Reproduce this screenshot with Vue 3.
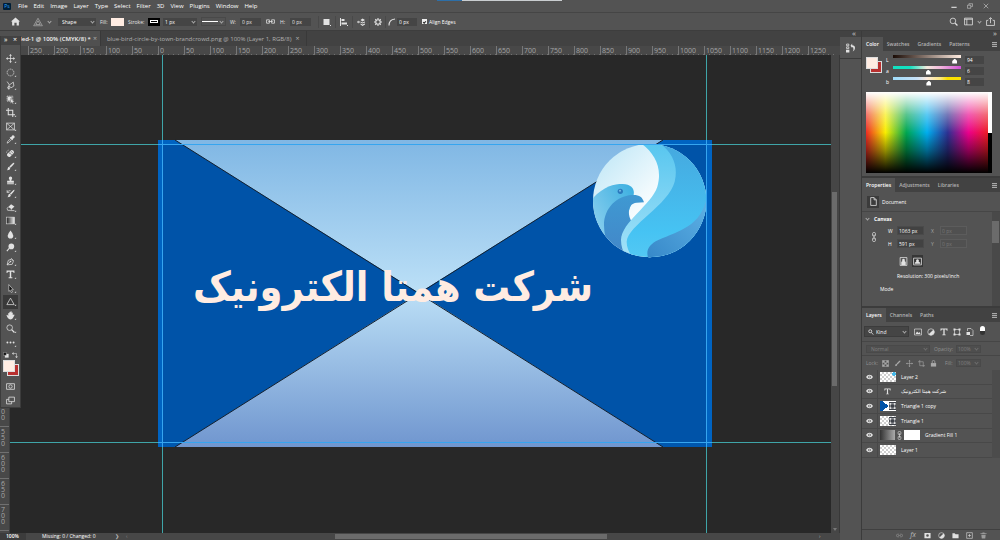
<script setup>
import { ref } from 'vue'

const menus = ['File', 'Edit', 'Image', 'Layer', 'Type', 'Select', 'Filter', '3D', 'View', 'Plugins', 'Window', 'Help']

const topMarks = Array.from({ length: 31 }, (_, i) => Math.abs(i * 50 - 250))
const sideMarks = ['500', '550', '600', '650', '700', '']

const line = 'fill="none" stroke="#e2e2e2" stroke-width="1.3"'
const tools = [
  { name: 'Move', art: `<path ${line} d="M8 2v12M2 8h12"/><path d="M8 0l2.500 3h-5zM8 16l2.500-3h-5zM0 8l3-2.500v5zM16 8l-3-2.500v5z"/>` },
  { name: 'Elliptical marquee', art: `<circle cx="8" cy="8" r="6" ${line} stroke-dasharray="2.500 1.200"/>` },
  { name: 'Lasso', art: `<path ${line} d="M2 1l4 6 7-5 1 7-5 3-3-3-2 2 1 4M6 7l-2 3"/><circle cx="5" cy="12" r="2" ${line}/>` },
  { name: 'Object selection', art: `<path ${line} stroke-dasharray="2 1" d="M2 2h10v9H2z"/><path d="M3 3h7v7H3z"/><path stroke="#555" stroke-width=".6" d="M8 6l7 6-3 .3 1.500 3-1.500.7-1.500-3L8 15z"/>` },
  { name: 'Crop', art: `<path fill="none" stroke="#e2e2e2" stroke-width="1.800" d="M4 0v12h12M0 4h12v12"/>` },
  { name: 'Frame', art: `<path ${line} d="M1 2h14v12H1zM1 2l14 12M15 2L1 14"/>` },
  { name: 'Eyedropper', art: `<path d="M9 4l2-3q2-1 3.500.5T15 5l-3 2 .5 1-1.500 1.500L6.500 5 8 3.500z"/><path ${line} d="M8.500 6L3 11.500 2 14.500 5 13l5-5"/>` },
  { name: 'Healing brush', art: `<path d="M2 9l7-7q2-1 4 1t1 4l-7 7q-2 1-4-1T2 9z"/><path fill="none" stroke="#555" stroke-width="1" d="M5 6l6 5M8 3l5 5M6 8h1M8 7h1"/><path ${line} stroke-dasharray="1 1" d="M1 7q0-5 5-5"/>` },
  { name: 'Brush', art: `<path d="M14.500 1.500q1 1-1 3L8 10 6 8l5.500-5.500q2-2 3-1zM5.500 8.500l2 2q0 4-6 4 2-1.500 1.500-3 .5-3 2.500-3z"/>` },
  { name: 'Clone stamp', art: `<path d="M8 1q3 0 3 3 0 1-1.500 3v1.500H14V12H2V8.500h4.500V7Q5 5 5 4q0-3 3-3zM2 13h12v1.500H2z"/>` },
  { name: 'History brush', art: `<path d="M15 1.500q.5 1-1 3L9 10 7 8l5-5q2-2 3-1.500zM6.500 8.500l2 2q0 4-6 4 2-1.500 1.500-3 .5-3 2.500-3z"/><path ${line} d="M2 2v4h4M2 6q2-4 6-3"/>` },
  { name: 'Eraser', art: `<path d="M9 2l6 4-5 5-6-4z"/><path ${line} d="M4 7l-2 3 1 3h5l2-2M8 13.500h7"/>` },
  { name: 'Gradient', art: `<rect x="1" y="2" width="14" height="12" fill="url(#toolGradient)" stroke="#e2e2e2"/>` },
  { name: 'Blur', art: `<path d="M8 1q5 6 5 9 0 5-5 5t-5-5q0-3 5-9z"/>` },
  { name: 'Dodge', art: `<circle cx="9.500" cy="6" r="5"/><path stroke="#e2e2e2" stroke-width="1.800" d="M6 9l-4.500 5.500"/>` },
  { name: 'Pen', art: `<path ${line} d="M2 14l2-8 5-2 4 4-2 5zM2 14l5-5M9 2l5 5"/><circle cx="8" cy="8" r="1.500"/>` },
  { name: 'Type', art: `<path d="M1 1h14v4.500h-1.500q0-2.500-2-2.500H9.300v10h2v1.500H4.700V13h2V3H4.500q-2 0-2 2.500H1z"/>` },
  { name: 'Path selection', art: `<path fill="#111" stroke="#e2e2e2" stroke-width="1.100" d="M5 1l8 9-3.500.3 2 4-2 1-2-4L5 13z"/>` },
  { name: 'Triangle', active: true, art: `<path ${line} d="M8 2l6.500 11.500h-13z"/>` },
  { name: 'Hand', art: `<path d="M4 9V4q1-1 2 0V2q1-1 2 0V1q1-1 2 0v2q1-1 2 0v4l2-1q1.500 0 1 1.500L12 13q-1 2-4 2t-5-3L1 8q0-1.500 1.500-1z"/>` },
  { name: 'Zoom', art: `<circle cx="6.500" cy="6.500" r="5" ${line}/><path stroke="#e2e2e2" stroke-width="2.200" d="M10 10l5 5"/>` },
  { name: 'Edit toolbar', art: `<circle cx="2.500" cy="8" r="1.700"/><circle cx="8" cy="8" r="1.700"/><circle cx="13.500" cy="8" r="1.700"/>` }
]
const corner = '<path fill="#c8c8c8" d="M18 13v3h-3z"/>'

const sliders = ref([
  { id: 'L', value: '94', at: 94 },
  { id: 'a', value: '6', at: 52 },
  { id: 'b', value: '8', at: 53 }
])
const size = ref([
  { id: 'W', value: '1063 px', axis: 'X' },
  { id: 'H', value: '591 px', axis: 'Y' }
])

const filters = [
  { name: 'Pixel layers', art: `<path ${line} d="M1 2h14v12H1z"/><path d="M3 12l3-5 3 3 2-2 2 4z"/>` },
  { name: 'Adjustment layers', art: `<circle cx="8" cy="8" r="6.500" ${line}/><path d="M12.600 3.400A6.500 6.500 0 013.400 12.600z"/>` },
  { name: 'Type layers', art: tools[16].art },
  { name: 'Shape layers', art: `<path ${line} d="M3 3h10v10H3z"/><path d="M1 1h4v4H1zM11 1h4v4h-4zM1 11h4v4H1zM11 11h4v4h-4z"/>` },
  { name: 'Smart objects', art: `<path ${line} d="M3 6V1h7l4 4v10H8"/><path d="M1 8h7v6H1z"/>` }
]
const locks = [
  { name: 'Lock transparency', art: `<path ${line} d="M1 1h14v14H1z"/><path d="M1 1h5v5H1zM10 1h5v5h-5zM5.500 5.500h5v5h-5zM1 10h5v5H1zM10 10h5v5h-5z"/>` },
  { name: 'Lock pixels', art: tools[8].art },
  { name: 'Lock position', art: tools[0].art },
  { name: 'Lock artboard', art: `<path ${line} d="M4 0v13h12M0 4h12v12"/>` },
  { name: 'Lock all', art: `<path d="M2 7h12v8H2z"/><path fill="none" stroke="#e2e2e2" stroke-width="1.800" d="M5 7V4q0-3 3-3t3 3v3"/>` }
]
const layers = [
  { name: 'Layer 2', kind: 'logo' },
  { name: 'شرکت همتا الکترونیک', kind: 'type' },
  { name: 'Triangle 1 copy', kind: 'blue' },
  { name: 'Triangle 1', kind: 'shape' },
  { name: 'Gradient Fill 1', kind: 'fill' },
  { name: 'Layer 1', kind: 'plain' }
]
const layerActions = [
  { name: 'Link layers', off: true, art: `<path ${line} d="M7 5H4q-3 0-3 3t3 3h3M9 5h3q3 0 3 3t-3 3H9M5 8h6"/>` },
  { name: 'Layer effects', fx: true },
  { name: 'Add mask', art: `<path d="M1 2h14v12H1zM8 5a3 3 0 100 6 3 3 0 000-6z" fill-rule="evenodd"/>` },
  { name: 'New adjustment', art: filters[1].art },
  { name: 'New group', art: `<path d="M1 3h5l2 2h7v9H1z"/>` },
  { name: 'New layer', art: `<path ${line} d="M1.500 1.500h13v13h-13zM8 4.500v7M4.500 8h7"/>` },
  { name: 'Delete layer', off: true, art: `<path d="M1 3h4l1-2h4l1 2h4v1.500H1zM3 6h10l-1 9H4z"/>` }
]
</script>

<template>
  <div class="app">
    <svg class="defs" aria-hidden="true">
      <defs>
        <linearGradient id="toolGradient"><stop stop-color="#222" /><stop offset="1" stop-color="#eee" /></linearGradient>
      </defs>
    </svg>
    <div class="behind"></div>

    <header class="menubar">
      <span class="ps">Ps</span>
      <nav class="menus"><button v-for="m in menus" :key="m">{{ m }}</button></nav>
      <div class="window-buttons">
        <button aria-label="Minimize"><svg viewBox="0 0 16 16"><path d="M1 10h14v3H1z" /></svg></button>
        <button aria-label="Restore"><svg viewBox="0 0 16 16"><path class="ln" d="M5 5V2h10v7h-4M1 6h9v8H1z" /></svg></button>
        <button aria-label="Close"><svg viewBox="0 0 16 16"><path class="ln" d="M2 2l12 12M14 2L2 14" /></svg></button>
      </div>
    </header>

    <div class="options">
      <button class="home" aria-label="Home"><svg viewBox="0 0 16 16"><path d="M8 1l8 7h-2v7h-4v-5H6v5H2V8H0z" /></svg></button>
      <button class="preset" aria-label="Triangle tool preset">
        <svg viewBox="0 0 16 16"><path class="thin" d="M8 2l7 12H1zM8 6l3.500 6h-7z" /></svg><i class="chev"></i>
      </button>
      <span class="pick mode"><select aria-label="Tool mode"><option>Shape</option></select><i class="chev"></i></span>
      <span class="lab fill-label">Fill:</span><button class="fill" aria-label="Fill color"></button>
      <span class="lab stroke-label">Stroke:</span><button class="stroke" aria-label="Stroke color"><i></i></button>
      <span class="pick weight"><input aria-label="Stroke width" value="1 px"><i class="chev"></i></span>
      <button class="dash" aria-label="Stroke type"><i></i><i class="chev"></i></button>
      <label class="lab dim"><span>W:</span><input value="0 px"></label>
      <button class="link" aria-label="Link width and height"><svg viewBox="0 0 16 16"><path class="ln" d="M1 5h5v6H1zM10 5h5v6h-5zM4 8h8" /></svg></button>
      <label class="lab dim"><span>H:</span><input value="0 px"></label>
      <div class="ops">
        <button aria-label="Path operations"><svg viewBox="0 0 16 16"><path d="M1 2h12v12H1zM14 14h2v2h-2z" /></svg></button>
        <button aria-label="Path alignment"><svg viewBox="0 0 16 16"><path d="M0 0h2v16H0zM3 2h6v4H3zM3 9h11v4H3zM14 14h2v2h-2z" /></svg></button>
        <button aria-label="Path arrangement"><svg viewBox="0 0 16 16"><path d="M0 8l3-3v2h3v2H3v2zM7 4l4-3 5 3-5 3zM7 7l4 2 5-2v2l-5 2-4-2zM7 11l4 2 5-2v2l-5 3-4-3z" /></svg></button>
        <button aria-label="Path options"><svg viewBox="0 0 16 16"><circle class="thick" cx="8" cy="8" r="4.500" /><path class="thick" d="M8 0v3M8 13v3M0 8h3M13 8h3M2.500 2.500l2 2M11.500 11.500l2 2M13.500 2.500l-2 2M4.500 11.500l-2 2" /></svg></button>
      </div>
      <label class="radius"><svg viewBox="0 0 16 16" aria-label="Corner radius"><path class="thick" d="M2 15Q2 3 14 2" /></svg><input value="0 px"></label>
      <label class="edges"><input type="checkbox" checked>Align Edges</label>
      <div class="right">
        <button aria-label="Search"><svg viewBox="0 0 16 16"><circle class="ln" cx="7" cy="7" r="5" /><path class="thick" d="M11 11l4 4" /></svg></button>
        <button aria-label="Workspace"><svg viewBox="0 0 16 16"><path class="ln" d="M1 2h14v12H1zM1 4h14M5 4v10" /></svg></button>
        <i class="chev"></i>
        <button aria-label="Share"><svg viewBox="0 0 16 16"><path class="ln" d="M4 6H1v9h14V6h-3M8 11V2M5 4l3-3 3 3" /></svg></button>
      </div>
    </div>

    <div class="workspace">
      <main class="document">
        <div class="doc-tabs">
          <button class="active">led-1 @ 100% (CMYK/8) * <span class="x">×</span></button>
          <button>blue-bird-circle-by-town-brandcrowd.png @ 100% (Layer 1, RGB/8) <span class="x">×</span></button>
        </div>
        <div class="ruler-top"><span v-for="(n, i) in topMarks" :key="i">{{ n }}</span></div>
        <div class="middle">
          <div class="ruler-side"><span v-for="n in sideMarks" :key="n"><b>{{ n }}</b></span></div>
          <div class="canvas">
            <svg class="art" viewBox="10 55 821 478" role="img" aria-label="Artwork">
              <defs>
                <linearGradient id="skyTop" x1="0" y1="0" x2="0" y2="1"><stop stop-color="#80b7e4" /><stop offset="1" stop-color="#bce0f7" /></linearGradient>
                <linearGradient id="skyLow" x1="0" y1="0" x2="0" y2="1"><stop stop-color="#bbdff6" /><stop offset="1" stop-color="#7096cf" /></linearGradient>
                <linearGradient id="moon" x1="0" y1="0" x2="1" y2="1"><stop stop-color="#b5e3f5" /><stop offset=".55" stop-color="#fff" /></linearGradient>
                <linearGradient id="wing" x1="0" y1="0" x2="0" y2="1"><stop stop-color="#45a7de" /><stop offset=".75" stop-color="#46c3f3" /><stop offset="1" stop-color="#55c9f4" /></linearGradient>
                <linearGradient id="crest" x1="0" y1="0" x2="0" y2="1"><stop stop-color="#55c5ef" /><stop offset="1" stop-color="#a8e3f8" /></linearGradient>
                <linearGradient id="head" x1="1" y1="0" x2="0" y2="1"><stop stop-color="#39aee0" /><stop offset="1" stop-color="#a5daf3" /></linearGradient>
                <linearGradient id="body" x1="0" y1="0" x2="0" y2="1"><stop stop-color="#3f99d2" /><stop offset="1" stop-color="#4384c7" /></linearGradient>
                <linearGradient id="tail" x1="0" y1="1" x2="1" y2="0"><stop stop-color="#3587c8" /><stop offset="1" stop-color="#61b4e7" /></linearGradient>
                <clipPath id="disc"><circle cx="239" cy="212" r="170" /></clipPath>
              </defs>
              <rect x="158" y="140" width="554" height="307" fill="#0063c1" />
              <rect x="162" y="144" width="545" height="298" fill="#0053a8" />
              <rect x="162" y="442" width="545" height="5" fill="#0057ae" />
              <path d="M175 140L419 293 663 140z" fill="url(#skyTop)" />
              <path d="M175 447L419 293 663 447z" fill="url(#skyLow)" />
              <path d="M175 140L663 447M663 140L175 447" stroke="#14202e" stroke-width="1" />
              <g transform="translate(570 130) scale(.3333)">
                <g clip-path="url(#disc)">
                  <rect x="60" y="35" width="360" height="360" fill="url(#moon)" />
                  <path d="M60 215C95 170 130 162 158 162 190 164 196 180 189 205L130 390H60z" fill="url(#head)" />
                  <path d="M222 217C218 200 205 193 185 195 140 198 102 235 102 285 102 310 108 330 115 350L175 400 200 300 185 275C170 250 175 220 200 218z" fill="url(#body)" />
                  <path d="M213 40C255 70 278 115 262 170 244 225 155 275 153 330 153 360 168 385 185 395L420 390V30z" fill="url(#crest)" />
                  <path d="M270 40C310 70 325 110 314 155 296 225 174 285 170 335 170 360 185 380 200 395L420 390V30z" fill="url(#wing)" />
                  <path d="M412 195C395 290 330 300 265 330 230 346 225 370 240 395H420z" fill="url(#tail)" />
                </g>
                <circle cx="151" cy="184" r="8" fill="#2b79bd" /><circle cx="150" cy="182" r="3" fill="#78bce8" />
              </g>
              <text class="company" x="393" y="301" text-anchor="middle" direction="rtl">شرکت همتا الکترونیک</text>
              <path d="M162.500 55V533M706.500 55V533M10 144.500H831M10 442.500H831" stroke="#3fa5a8" />
              <path d="M162.500 140V447M706.500 140V447M158 144.500H712M158 442.500H712" stroke="#36a5ef" />
            </svg>
          </div>
          <div class="scroll-y"><i></i><span class="tip"></span></div>
        </div>
        <footer class="status">
          <span class="zoom">100%</span><span class="info">Missing: 0 / Changed: 0</span><span class="arrow">❯</span><span class="arrow dim-arrow">‹</span>
          <div class="scroll-x"><i></i></div><span class="arrow">›</span>
        </footer>
      </main>

      <aside class="strip">
        <div class="dock-top">«</div>
        <button class="history" aria-label="History"><svg viewBox="0 0 16 16"><path class="ln" d="M1 1h4v3H1zM1 6h4v3H1z" /><path d="M0 11h6v5H0zM8 4l3-4v3q5 0 5 5 0 4-4 6 2-3 1-6 0-2-2-2v2z" /></svg></button>
      </aside>

      <aside class="panels">
        <div class="dock-top end">»</div>
        <section class="color-panel">
          <div class="tabs"><button class="active">Color</button><button>Swatches</button><button>Gradients</button><button>Patterns</button><i class="burger"></i></div>
          <div class="color-body">
            <div class="mix">
              <div class="swatches"><i></i><i></i></div>
              <div class="sliders">
                <div v-for="s in sliders" :key="s.id" class="slide">
                  <label :for="'range' + s.id">{{ s.id }}</label>
                  <input :id="'range' + s.id" type="range" :class="'r' + s.id" :value="s.at">
                  <input v-model="s.value" class="num" :aria-label="s.id + ' value'">
                </div>
              </div>
            </div>
            <div class="spectrum"><i class="hues"></i><i class="mono"></i></div>
          </div>
        </section>

        <section class="properties">
          <div class="tabs"><button class="active">Properties</button><button>Adjustments</button><button>Libraries</button><i class="burger"></i></div>
          <div class="doc-row"><span class="doc-icon"><svg viewBox="0 0 16 16"><path class="ln" d="M3 1h6l4 4v10H3zM9 1v4h4" /></svg></span>Document</div>
          <div class="prop-body">
            <div class="prop-main">
              <h3><i class="chev"></i>Canvas</h3>
              <div class="dims">
                <svg viewBox="0 0 10 20"><path class="ln" d="M2 7V3q0-2 3-2t3 2v4q0 1-3 1T2 7zM2 13v4q0 2 3 2t3-2v-4q0-1-3-1t-3 1zM5 5v10" /></svg>
                <div class="dim-rows">
                  <div v-for="d in size" :key="d.id" class="dim-row">
                    <label :for="'size' + d.id">{{ d.id }}</label><input :id="'size' + d.id" v-model="d.value">
                    <label :for="'pos' + d.axis" class="away">{{ d.axis }}</label><input :id="'pos' + d.axis" value="0 px" disabled>
                  </div>
                </div>
              </div>
              <div class="orient">
                <button aria-label="Portrait"><svg viewBox="0 0 16 16"><path class="ln" d="M2 1h12v14H2z" /><path d="M8 3a2.500 2.500 0 012 4l2 2v5H4V9l2-2a2.500 2.500 0 012-4z" /></svg></button>
                <button class="on" aria-label="Landscape"><svg viewBox="0 0 16 16"><path class="ln" d="M1 2h14v12H1z" /><path d="M8 4a2.500 2.500 0 012 4l3 2v2H3v-2l3-2a2.500 2.500 0 012-4z" /></svg></button>
              </div>
              <p class="res">Resolution: 300 pixels/inch</p>
              <p class="color-mode">Mode</p>
            </div>
            <div class="prop-scroll"><i></i></div>
          </div>
        </section>

        <section class="layers">
          <div class="tabs"><button class="active">Layers</button><button>Channels</button><button>Paths</button><i class="burger"></i></div>
          <div class="filter-row">
            <span class="pick kind"><svg viewBox="0 0 16 16"><circle class="thick" cx="6" cy="6" r="4" /><path class="thick" d="M9 9l5 6" /></svg><select aria-label="Layer filter"><option>Kind</option></select><i class="chev"></i></span>
            <button v-for="f in filters" :key="f.name" :aria-label="f.name"><svg viewBox="0 0 16 16" v-html="f.art"></svg></button>
            <button class="toggle" aria-label="Filter switch"><i></i></button>
          </div>
          <div class="blend-row faded">
            <span class="pick blend"><select aria-label="Blend mode" disabled><option>Normal</option></select><i class="chev"></i></span>
            <label for="opacity">Opacity:</label><span class="pick pct"><input id="opacity" value="100%" disabled><i class="chev"></i></span>
          </div>
          <div class="lock-row faded">
            <span class="lock-label">Lock:</span>
            <button v-for="l in locks" :key="l.name" :aria-label="l.name" disabled><svg viewBox="0 0 16 16" v-html="l.art"></svg></button>
            <label for="fillpct">Fill:</label><span class="pick pct"><input id="fillpct" value="100%" disabled><i class="chev"></i></span>
          </div>
          <div class="list-wrap">
            <ul class="list">
              <li v-for="l in layers" :key="l.name">
                <button class="eye" :aria-label="'Visibility of ' + l.name"><svg viewBox="0 0 16 12"><path fill-rule="evenodd" d="M8 1q5 0 8 5-3 5-8 5T0 6q3-5 8-5zM8 3a3 3 0 100 6 3 3 0 000-6z" /><circle cx="8" cy="6" r="1.500" /></svg></button>
                <svg v-if="l.kind === 'type'" class="thumb-t" viewBox="0 0 16 16" v-html="filters[2].art"></svg>
                <span v-else class="thumb" :class="l.kind"><svg v-if="l.kind === 'blue' || l.kind === 'shape'" viewBox="0 0 16 16" v-html="filters[3].art"></svg></span>
                <template v-if="l.kind === 'fill'">
                  <svg class="chain" viewBox="0 0 10 20"><path class="ln" d="M2 7V3q0-2 3-2t3 2v4q0 1-3 1T2 7zM2 13v4q0 2 3 2t3-2v-4q0-1-3-1t-3 1zM5 5v10" /></svg><span class="thumb mask"></span>
                </template>
                <span class="lname">{{ l.name }}</span>
              </li>
            </ul>
            <div class="list-scroll"></div>
          </div>
          <div class="actions">
            <button v-for="a in layerActions" :key="a.name" :aria-label="a.name" :class="{ off: a.off }"><em v-if="a.fx">fx</em><svg v-else viewBox="0 0 16 16" v-html="a.art"></svg></button>
          </div>
        </section>
      </aside>
    </div>

    <aside class="toolbox">
      <div class="tb-head"><span>»</span><span>×</span></div>
      <div class="tools">
        <button v-for="t in tools" :key="t.name" :aria-label="t.name" :class="{ active: t.active }"><svg viewBox="0 0 16 16" v-html="t.art + corner"></svg></button>
      </div>
      <div class="mini">
        <svg viewBox="0 0 16 16"><path d="M5 5h10v10H5z" /><path fill="#111" stroke="#ddd" d="M1 1h8v8H1z" /></svg>
        <svg viewBox="0 0 16 16"><path class="ln" d="M3 4h9v9" /><path d="M0 4l4-4v8zM12 16l-4-4h8z" /></svg>
      </div>
      <div class="tb-swatches swatches"><i></i><i></i></div>
      <button class="last" aria-label="Quick mask"><svg viewBox="0 0 16 16"><path class="ln" d="M1 3h14v10H1z" /><circle class="ln" cx="8" cy="8" r="3" /></svg></button>
      <button class="last" aria-label="Screen mode"><svg viewBox="0 0 16 16"><path class="ln" d="M5 2h10v8H5zM5 6H1v8h9v-4" /></svg></button>
    </aside>
  </div>
</template>

<style>
body { background: #282828; overflow: hidden; }
</style>

<style scoped>
.app { position: relative; display: flex; flex-direction: column; height: 100vh; background: #535353; color: #fff; font: 5px/8px "Open Sans", "Noto Sans", sans-serif; overflow: hidden; }
.app *, .app *::before { box-sizing: border-box; }
button, input, select { font: inherit; color: inherit; border: 0; padding: 0; margin: 0; background: none; border-radius: 0; min-width: 0; }
select { appearance: none; width: 100%; opacity: 1; }
svg { display: block; width: 9px; height: 9px; fill: #e2e2e2; }
button { display: flex; align-items: center; justify-content: center; white-space: nowrap; }
.ln, .thin, .thick { fill: none; stroke: #e2e2e2; stroke-width: 1.4; }
.thin { stroke: #bbb; stroke-width: 1; }
.thick { stroke-width: 2.2; }
.defs { position: absolute; width: 0; height: 0; }
.behind { position: absolute; top: 0; left: 437px; width: 125px; height: 1px; background: linear-gradient(90deg, #2d6fa8 25px, #c9cdd0 25px); }
.chev { width: 3px; height: 3px; border: solid #aaa; border-width: 0 1px 1px 0; transform: rotate(45deg); flex: none; margin: 0 2px 1px; }

.menubar { display: flex; align-items: center; height: 13px; flex: none; padding: 0 11px 0 3px; border-bottom: 1px solid #454545; }
.ps { width: 8px; height: 7px; background: #001e36; color: #31a8ff; font-size: 5px; line-height: 7px; text-align: center; border-radius: 1px; }
.menus { display: flex; gap: 6px; margin-left: 7px; font-size: 6px; }
.window-buttons { display: flex; gap: 10px; margin-left: auto; }
.window-buttons svg { width: 6px; height: 6px; }

.options { display: flex; align-items: center; height: 18px; flex: none; padding: 0 5px 0 10px; border-bottom: 1px solid #3d3d3d; }
.home { width: 10px; }
.preset { width: 27px; margin-left: 9px; gap: 3px; }
.preset svg { width: 10px; height: 10px; }
.pick { display: flex; align-items: center; background: #454545; height: 8px; }
.pick select, .pick input { flex: 1; width: 0; height: 8px; padding-left: 4px; }
.mode { width: 38px; margin-left: 2px; }
.lab { color: #e4e4e4; white-space: nowrap; }
.fill-label { margin-left: 4px; width: 11px; }
.fill { width: 13px; height: 8px; background: #ffece2; }
.stroke-label { margin-left: 4px; width: 20px; }
.stroke { width: 12px; height: 8px; background: #000; }
.stroke i { width: 8px; height: 3px; border: 1px solid #fff; }
.weight { width: 34px; margin-left: 3px; }
.weight input { padding-left: 2px; }
.dash { width: 25px; height: 9px; margin-left: 4px; border: 1px solid #494949; }
.dash i:first-child { width: 16px; height: 1px; background: #fff; }
.dim { display: flex; margin-left: 4px; }
.dim span { width: 10px; }
.dim input { width: 21px; height: 8px; background: #454545; padding-left: 2px; }
.link { margin: 0 1px 0 5px; }
.ops { display: flex; margin-left: 7px; }
.ops button { width: 17px; height: 12px; border-left: 1px solid #494949; }
.ops button:last-child { border-right: 1px solid #494949; }
.ops svg { width: 8px; height: 8px; }
.radius { display: flex; align-items: center; gap: 1px; margin-left: 2px; }
.radius svg { width: 8px; height: 8px; }
.radius input { width: 20px; height: 8px; padding-left: 2px; background: #454545; }
.edges { display: flex; align-items: center; gap: 2px; margin-left: 5px; white-space: nowrap; }
.edges input { appearance: none; width: 5px; height: 5px; background: #eee; display: grid; place-items: center; }
.edges input::before { content: ""; width: 3px; height: 2px; border: solid #222; border-width: 0 0 1px 1px; transform: rotate(-45deg); }
.right { display: flex; align-items: center; gap: 6px; margin-left: auto; }
.right .chev { margin: 0 -1px 1px; }

.workspace { display: flex; flex: 1; min-height: 0; }
.document { display: flex; flex-direction: column; flex: 1; min-width: 0; }
.doc-tabs { display: flex; height: 15px; flex: none; background: #424242; color: #b0b0b0; font-size: 6px; }
.doc-tabs button { padding: 0 6px; gap: 4px; border-right: 1px solid #393939; }
.doc-tabs .active { background: #505050; color: #f2f2f2; padding: 0 3px 0 20px; gap: 2px; font-weight: 600; }
.x { font-weight: 400; color: #aaa; font-size: 7px; }
.ruler-top { display: flex; height: 9px; flex: none; padding-left: 28px; overflow: hidden; background: #484848; color: #a5a5a5; font-size: 7px; line-height: 10px; }
.ruler-top span { width: 26px; flex: none; padding-left: 1px; border-left: 1px solid #777; background: repeating-linear-gradient(90deg, transparent 0 4px, #707070 4px 5px) 0 100% / 100% 1px no-repeat; }
.middle { display: flex; flex: 1; min-height: 0; }
.ruler-side { width: 10px; flex: none; padding-top: 345px; background: #484848; color: #a5a5a5; font-size: 7px; line-height: 6px; overflow: hidden; border-right: 1px solid #3c3c3c; }
.ruler-side span { display: block; height: 26px; padding: 2px 0 0 1px; border-top: 1px solid #707070; }
.ruler-side b { display: block; width: 4px; font-weight: 400; overflow-wrap: anywhere; }
.canvas { flex: 1; min-width: 0; overflow: hidden; background: #282828; }
.art { width: 100%; height: 100%; }
.company { font: bold 41px "DejaVu Sans Condensed", "DejaVu Sans", sans-serif; fill: #ffece2; }
.scroll-y { display: flex; flex-direction: column; width: 9px; flex: none; background: #464646; padding: 137px 2px 2px 1px; border-right: 1px solid #383838; }
.scroll-y i { height: 194px; background: #6b6b6b; }
.tip { margin-top: auto; align-self: center; border: solid transparent; border-width: 3px 2px 0; border-top-color: #777; }
.status { display: flex; align-items: center; height: 7px; flex: none; background: #474747; line-height: 7px; padding-right: 10px; }
.zoom { width: 26px; padding-left: 6px; background: #3c3c3c; font-weight: 600; }
.info { margin-left: 16px; width: 73px; white-space: nowrap; }
.arrow { width: 11px; color: #bbb; }
.dim-arrow { color: #888; }
.scroll-x { flex: 1; padding-left: 198px; }
.scroll-x i { display: block; width: 272px; height: 5px; background: #6b6b6b; }

.strip { width: 22px; flex: none; border-right: 1px solid #3b3b3b; }
.dock-top { height: 6px; background: #424242; font-size: 8px; line-height: 4px; padding-left: 12px; color: #ccc; }
.end { text-align: right; padding-right: 3px; }
.history { width: 21px; height: 22px; border-bottom: 1px solid #3b3b3b; }
.history svg { width: 9px; height: 10px; }
.panels { width: 138px; flex: none; display: flex; flex-direction: column; }
.tabs { display: flex; align-items: stretch; height: 14px; flex: none; background: #424242; color: #b4b4b4; font-weight: 600; }
.tabs button { padding: 0 4px; }
.tabs .active { background: #535353; color: #fff; }
.burger { width: 5px; height: 5px; margin: 5px 3px 0 auto; background: repeating-linear-gradient(#aaa 0 1px, #555 1px 2px); }
.color-panel { height: 141px; flex: none; border-bottom: 2px solid #3c3c3c; }
.color-body { padding: 4px 8px 4px 4px; }
.mix { display: flex; height: 37px; }
.swatches { width: 16px; height: 16px; flex: none; display: grid; grid-template: repeat(4, 1fr) / repeat(4, 1fr); }
.swatches i { border: 1px solid #ddd; grid-area: 1 / 1 / 4 / 4; background: #ffece2; z-index: 1; }
.swatches i + i { grid-area: 2 / 2 / 5 / 5; background: #b8302f; z-index: 0; }
.mix .swatches { margin: 2px 4px 0 0; }
.sliders { flex: 1; min-width: 0; }
.slide { display: flex; height: 11px; align-items: flex-start; }
.slide label { width: 7px; padding-top: 1px; flex: none; }
.slide input[type=range] { appearance: none; flex: 1; width: 0; height: 9px; background: linear-gradient(90deg, #1a0b05, #ffece0) 0 0 / 100% 3px no-repeat; }
.slide input[type=range]::-webkit-slider-thumb { appearance: none; width: 5px; height: 5px; margin-top: 3px; background: #fff; clip-path: polygon(50% 0, 100% 50%, 100% 100%, 0 100%, 0 50%); }
.slide input.ra { background-image: linear-gradient(90deg, #12e0c0 0 25%, #f4e9dc 50%, #f2b6dc 70%, #cf50d5); }
.slide input.rb { background-image: linear-gradient(90deg, #9fdcfa, #c6e0f7 35%, #fce9dc 50%, #fbe77c 70%, #fbe000 80%); }
.num { width: 19px; flex: none; height: 8px; margin: 1px 8px 0 4px; padding-left: 2px; background: #454545; }
.spectrum { display: flex; height: 81px; }
.hues { flex: 1; background: linear-gradient(#fff, rgba(255,255,255,.35) 28%, transparent 50%, rgba(0,0,0,.4) 72%, #000), linear-gradient(90deg, #ee2b24, #f8ee00 16%, #00a650 33%, #00aeef 50%, #2e3192 67%, #ec008c 84%, #ed1c24); }
.mono { width: 4px; background: linear-gradient(#fff 50%, #000 50%); }

.properties { height: 130px; flex: none; display: flex; flex-direction: column; border-bottom: 2px solid #3c3c3c; }
.doc-row { display: flex; align-items: center; gap: 3px; height: 20px; flex: none; padding-left: 5px; border-bottom: 1px solid #464646; }
.doc-icon { width: 12px; height: 12px; display: grid; place-items: center; background: #3b3b3b; }
.prop-body { display: flex; flex: 1; min-height: 0; }
.prop-main { flex: 1; padding-top: 3px; }
h3 { display: flex; align-items: center; gap: 3px; margin: 0; padding-left: 2px; font: inherit; font-weight: 700; }
.dims { display: flex; align-items: center; padding: 1px 0 0 9px; gap: 11px; }
.dims > svg { width: 6px; height: 10px; }
.dim-row { display: flex; align-items: center; height: 13px; }
.dim-row label { width: 9px; }
.dim-row input { width: 27px; height: 9px; background: #424242; border: 1px solid #4a4a4a; padding-left: 1px; }
.dim-row .away { margin-left: 7px; color: #a5a5a5; }
.dim-row input:disabled { background: #505050; color: #787878; border-color: #5c5c5c; }
.orient { display: flex; gap: 3px; margin: 5px 0 0 36px; }
.orient button { width: 11px; height: 12px; }
.orient .on { background: #363636; }
.res { margin: 5px 0 0 35px; white-space: nowrap; }
.color-mode { margin: 5px 0 0 18px; }
.prop-scroll { width: 8px; padding: 9px 1px 0 0; background: #494949; }
.prop-scroll i { display: block; height: 22px; background: #6b6b6b; }

.layers { display: flex; flex-direction: column; flex: 1; min-height: 0; }
.filter-row, .blend-row, .lock-row { display: flex; align-items: center; flex: none; padding-left: 4px; }
.filter-row { height: 19px; gap: 4px; padding-left: 2px; }
.kind { width: 45px; height: 11px; border: 1px solid #3c3c3c; padding-left: 3px; }
.kind select { padding-left: 2px; }
.filter-row svg { width: 8px; height: 8px; }
.filter-row .kind svg { width: 6px; height: 6px; }
.filter-row button { width: 9px; }
.toggle { height: 10px; align-self: flex-start; }
.toggle i { width: 5px; height: 9px; border-radius: 3px; background: linear-gradient(#fff 5px, #333 5px); margin-top: 6px; }
.blend-row { height: 14px; border-top: 1px solid #464646; }
.lock-row { height: 15px; border-top: 1px solid #464646; }
.faded { color: #929292; }
.faded .pick { background: #4e4e4e; border: 1px solid #494949; }
.faded .chev { border-color: #6d6d6d; }
.faded svg { width: 7px; height: 7px; opacity: .6; }
.faded input, .faded select { color: #808080; }
.faded label { flex: none; white-space: nowrap; }
.blend { width: 64px; margin-right: 4px; flex: none; }
.pct { width: 25px; flex: none; }
.faded .pct input { padding-left: 1px; }
.blend-row label { width: 22px; }
.lock-label { width: 13px; }
.lock-row button { width: 12px; }
.lock-row label { width: 11px; margin-left: 6px; }
.list-wrap { display: flex; flex: 1; min-height: 0; }
.list { flex: 1; height: 88px; margin: 0; padding: 0; list-style: none; display: grid; grid-template-rows: repeat(6, 1fr); }
.list li { display: flex; align-items: center; border-bottom: 1px solid #484848; }
.list-scroll { width: 8px; background: #4c4c4c; height: 88px; }
.eye { width: 16px; align-self: stretch; border-right: 1px solid #484848; }
.eye svg { width: 7px; height: 6px; }
.thumb { display: flex; justify-content: flex-end; align-items: center; width: 16px; height: 10px; margin-left: 2px; background: repeating-conic-gradient(#cfcfcf 0 25%, #fff 0 50%) 0 0 / 4px 4px; }
.thumb svg { width: 7px; height: 8px; background: #3d4148; }
.thumb-t { margin: 0 4px 0 6px; width: 7px; height: 7px; }
.thumb-t + .lname { margin-left: 6px; }
.logo { background: radial-gradient(circle at 88% 20%, #45b9ea 0 2px, transparent 2px), repeating-conic-gradient(#cfcfcf 0 25%, #fff 0 50%) 0 0 / 4px 4px; }
.blue { background: conic-gradient(from 235deg at 9px 50%, #0053a8 70deg, #fff 70deg); }
.fill.thumb { background: linear-gradient(90deg, #333, #aaa); width: 15px; height: 10px; }
.mask.thumb { background: #fff; margin-left: 2px; }
.chain { width: 5px; height: 9px; margin-left: 2px; }
.lname { margin-left: 5px; white-space: nowrap; font-family: "Open Sans", "DejaVu Sans", sans-serif; }
.actions { display: flex; justify-content: flex-end; align-items: center; gap: 6px; height: 11px; flex: none; padding-right: 13px; border-top: 1px solid #404040; }
.actions button { width: 8px; }
.actions svg { width: 7px; height: 7px; }
.actions em { font-size: 7px; color: #bbb; }
.off svg { opacity: .5; }

.toolbox { position: absolute; left: 0; top: 36px; width: 21px; background: #535353; border: solid #3c3c3c; border-width: 0 1px 1px; display: flex; flex-direction: column; align-items: center; }
.tb-head { display: flex; justify-content: space-between; align-self: stretch; height: 9px; padding: 0 3px; background: #424242; font-size: 7px; line-height: 7px; margin-bottom: 7px; }
.tools { display: grid; grid-template-rows: repeat(22, 1fr); height: 297px; }
.tools button { width: 15px; }
.tools svg { overflow: visible; }
.tools .active { background: #393939; }
.mini { display: flex; gap: 3px; margin-top: 3px; }
.mini svg { width: 6px; height: 6px; }
.tb-swatches { margin: 2px 0 3px; }
.last { height: 14px; }
</style>
